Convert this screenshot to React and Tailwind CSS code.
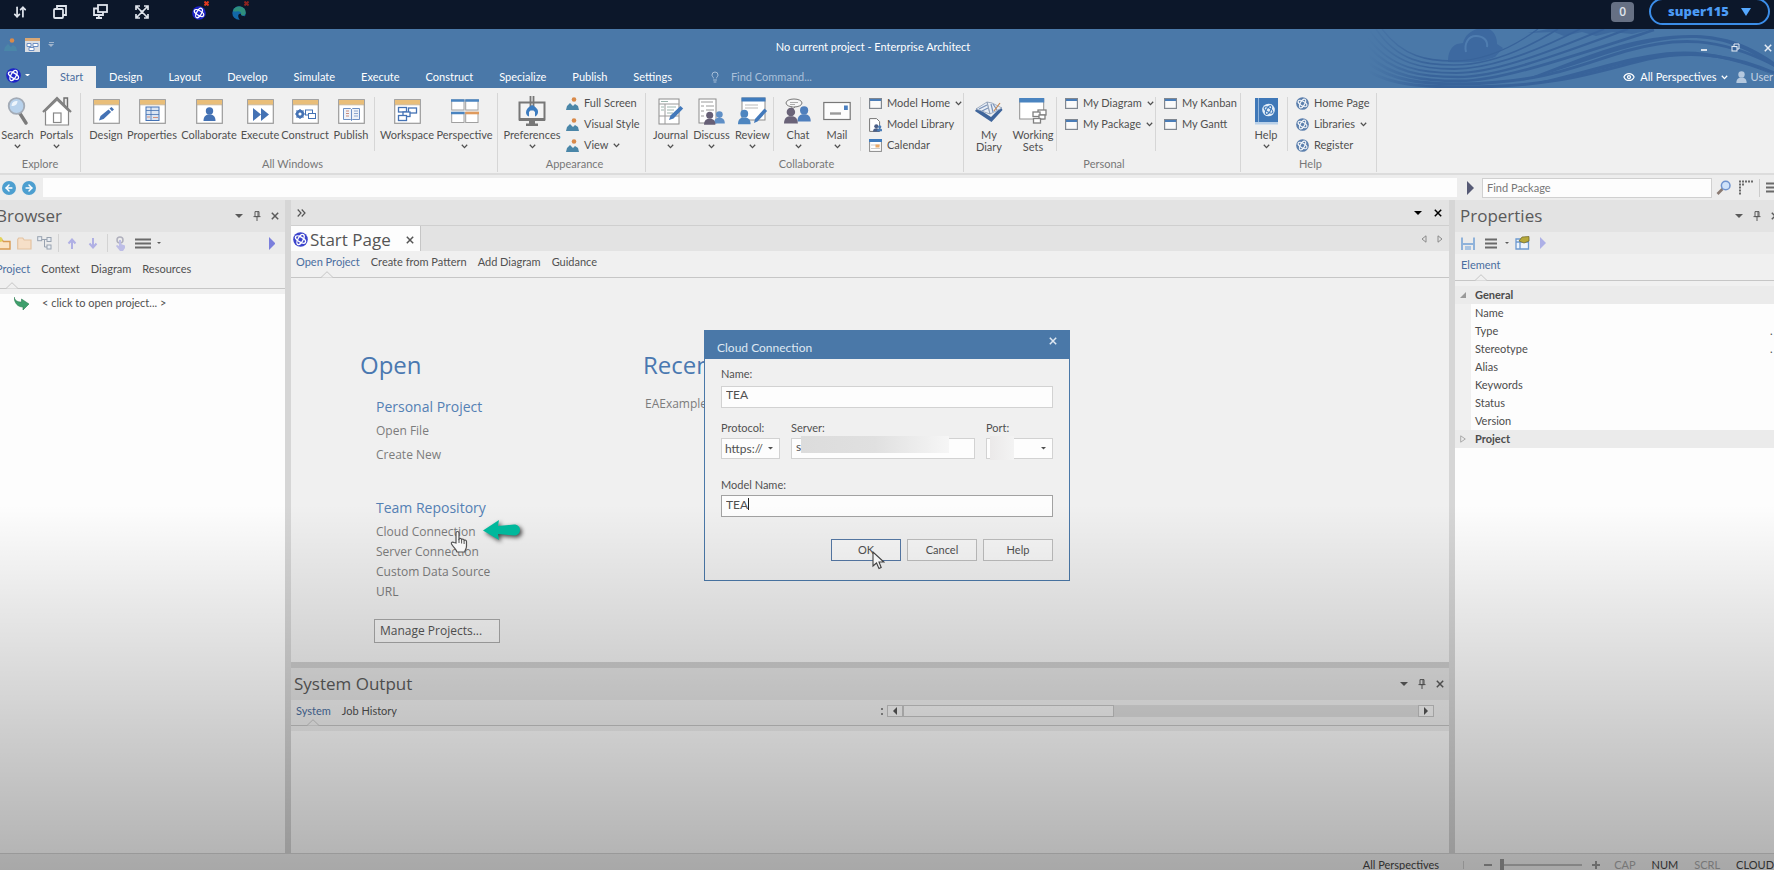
import { useState } from "react";
import { ArrowDownUp, ArrowLeft, ArrowRight, Eye, Lightbulb } from "lucide-react";

const BLUE = "#4472b4";

/* ---------- icons ---------- */

const Logo = ({ color = "#1d24c8", bg = "#ffffff", size = 14 }) => (
  <svg width={size} height={size} viewBox="0 0 16 16" className="shrink-0">
    <circle cx="8" cy="8" r="7.8" fill={color} />
    <g fill="none" stroke={bg} strokeWidth="1.4">
      <ellipse cx="8" cy="8" rx="6" ry="2.7" transform="rotate(30 8 8)" />
      <ellipse cx="8" cy="8" rx="6" ry="2.7" transform="rotate(-60 8 8)" />
    </g>
  </svg>
);

const Chevron = () => (
  <svg width="7" height="5" viewBox="0 0 7 5" className="shrink-0">
    <path d="M.8.8 3.5 3.6 6.2.8" fill="none" stroke="currentColor" strokeWidth="1.3" />
  </svg>
);

const Down = ({ size = 8 }) => (
  <svg width={size} height={size / 2} viewBox="0 0 8 4" className="shrink-0">
    <path d="M0 0h8L4 4z" fill="currentColor" />
  </svg>
);

const Cross = ({ size = 8 }) => (
  <svg width={size} height={size} viewBox="0 0 8 8" className="shrink-0">
    <path d="M.8.8l6.4 6.4M7.2.8.8 7.2" stroke="currentColor" strokeWidth="1.5" />
  </svg>
);

const RedMark = ({ color }) => (
  <svg width="5" height="5" viewBox="0 0 5 5" className="absolute -top-[3px] left-3">
    <path d="M.5.5l4 4M4.5.5l-4 4" stroke={color} strokeWidth="2" />
  </svg>
);

const Pin = () => (
  <svg width="8" height="10" viewBox="0 0 8 10" className="shrink-0">
    <path d="M2 .6h4v5H2zM5 .6v5M.5 5.6h7M4 5.6V10" fill="none" stroke="currentColor" />
  </svg>
);

const Play = ({ color, size = 12 }) => (
  <svg width={size / 2} height={size} viewBox="0 0 6 12" className="shrink-0">
    <path d="M0 0l6 6-6 6z" fill={color} />
  </svg>
);

const Bars = () => (
  <svg width="16" height="11" viewBox="0 0 16 11" className="shrink-0">
    <path d="M0 1.5h16M0 5.5h16M0 9.5h16" stroke="#6a6a6a" strokeWidth="1.8" />
  </svg>
);

const Person = ({ x = 0, y = 0, s = 1, fill = BLUE }) => (
  <g transform={`translate(${x} ${y}) scale(${s})`} fill={fill}>
    <circle cx="6" cy="4" r="3.7" />
    <path d="M0 14c0-5 2.5-6.5 6-6.5s6 1.5 6 6.5z" />
  </g>
);

const Picture = () => (
  <svg width="13" height="13" viewBox="0 0 13 13" className="shrink-0">
    <circle cx="8" cy="2.5" r="2.3" fill="#d98a4a" />
    <path d="M0 13l1-4 3-3 3 3 2-2 3 2 1 4z" fill="#4a86a8" />
  </svg>
);

const Frame = ({ children }) => (
  <svg width="27" height="25" viewBox="0 0 27 25">
    <rect x=".7" y=".7" width="25.6" height="23.6" fill="#fff" stroke="#9b9b9b" strokeWidth="1.2" />
    <rect x="1" y="1" width="25" height="4.5" fill="#e9be79" />
    <path d="M1 5.8h25" stroke="#b9a078" strokeWidth=".7" />
    {children}
  </svg>
);

const ICONS = {
  search: (
    <svg width="22" height="28" viewBox="0 0 22 28">
      <path d="M12 15l7 11" stroke="#7b7b7b" strokeWidth="3.4" strokeLinecap="round" />
      <circle cx="9.5" cy="9" r="7.8" fill="#b8d2ec" stroke="#a3abb6" strokeWidth="1.8" />
      <path d="M4.5 9a5 5 0 0 1 6-5c0 3-2 5-6 5z" fill="#eef5fc" />
    </svg>
  ),
  portals: (
    <svg width="30" height="30" viewBox="0 0 30 30">
      <path d="M22 9V2h3.5v11" fill="#e8e8e8" stroke="#6e6e6e" strokeWidth="1.4" />
      <path d="M3.5 15v14h23V15L15 4z" fill="#fff" stroke="#888" strokeWidth="1.2" />
      <path d="M1 16L15 2l14 14" fill="none" stroke="#808080" strokeWidth="2.2" />
      <rect x="11.5" y="17" width="7.5" height="9.5" fill="#fff" stroke="#888" strokeWidth="1.2" />
    </svg>
  ),
  design: (
    <Frame>
      <path d="M6 21.5l1.5-4.5 8-6.5 2.6 2.6-7.5 7z" fill={BLUE} />
      <path d="M16.5 9.5l2-1.5 2.5 2.5-2 1.7z" fill={BLUE} />
    </Frame>
  ),
  properties: (
    <Frame>
      <rect x="7" y="8" width="13" height="13.5" fill="#dbe5f2" stroke={BLUE} />
      <path d="M7 11.5h13M7 15.5h13M12 8v13" stroke={BLUE} strokeWidth=".8" />
      <path d="M8 18h3M14 18.5h5" stroke="#d58f7b" />
    </Frame>
  ),
  collaborate: (
    <Frame>
      <Person x={7.5} y={8} />
    </Frame>
  ),
  execute: (
    <Frame>
      <path d="M6 9l8 6.5L6 22zM14 9l8 6.5-8 6.5z" fill={BLUE} />
    </Frame>
  ),
  construct: (
    <Frame>
      <circle cx="8" cy="15" r="3" fill="none" stroke={BLUE} strokeWidth="2.4" />
      <path d="M8 10v10M3 15h10M4.5 11.5l7 7M11.5 11.5l-7 7" stroke={BLUE} strokeWidth="1.2" />
      <circle cx="8" cy="15" r="1.5" fill="#fff" />
      <rect x="13.5" y="11" width="7" height="5" fill="#fff" stroke={BLUE} />
      <rect x="16.5" y="14.5" width="7" height="5" fill="#fff" stroke={BLUE} />
    </Frame>
  ),
  publish: (
    <Frame>
      <path d="M5.5 9.5h7l1 1 1-1h7v11h-7l-1 1-1-1h-7zM13.5 10.5v11" fill="#eef2f8" stroke="#6c8fc4" />
      <path d="M8 12h3M8 14.5h3M8 17h3" stroke="#c98c7c" />
      <path d="M16 12h4M16 14.5h4M16 17h4" stroke="#8ea8cf" />
    </Frame>
  ),
  workspace: (
    <Frame>
      <g fill="#fff" stroke={BLUE} strokeWidth="1.3">
        <rect x="4.5" y="8.5" width="8" height="4.5" />
        <rect x="14.5" y="9" width="8" height="5" />
        <rect x="9" y="13" width="7" height="4.5" />
        <rect x="4.5" y="16.5" width="8" height="5" />
      </g>
    </Frame>
  ),
  perspective: (
    <svg width="28" height="25" viewBox="0 0 28 25">
      <g fill="#fff" stroke="#a0a0a0">
        <rect x=".7" y="1" width="12.3" height="10" />
        <rect x="14.7" y="1" width="12.3" height="10" />
        <rect x=".7" y="13.5" width="12.3" height="10" />
        <rect x="14.7" y="13.5" width="12.3" height="10" />
      </g>
      <path d="M0 1.5h13.5M14.3 1.5H28M0 14h13.5" stroke="#4a84c0" strokeWidth="2.6" />
      <path d="M14.3 14H28" stroke="#df9a5d" strokeWidth="2.6" />
    </svg>
  ),
  preferences: (
    <svg width="28" height="30" viewBox="0 0 28 30">
      <rect x="1.5" y="6.5" width="25" height="17" fill="#f4f4f4" stroke="#777" strokeWidth="2" />
      <path d="M1 22h26v3H1zM11 25h6v2.5h3V30H8v-2.5h3z" fill="#777" />
      <path d="M12.5 0v11M15.5 0v11" stroke="#777" strokeWidth="1.8" />
      <path
        d="M14 9c4 2 6.5 4.5 6 7.5-.3 2-1.5 3.5-3 4v-4.5l-1.5-1.5h-3L11 16v4.5c-1.7-.7-3-2-3-4.3C8 13.5 10.5 11 14 9z"
        fill="#3c7cc0"
      />
    </svg>
  ),
  journal: (
    <svg width="26" height="27" viewBox="0 0 26 27">
      <rect x="1" y="1" width="20" height="25" fill="#fff" stroke="#8b8b8b" />
      <path d="M1 6h20M7 6v20M1 18h20" stroke="#9a9a9a" />
      <path d="M9 9h9M9 12h7M9 15h6M3 9h3M3 12h3M3 3.5h7" stroke="#9db5ae" />
      <path d="M11 22l1.5-4.5L22.5 8l2.7 2.6-9.7 9.9z" fill="#4279bb" />
    </svg>
  ),
  discuss: (
    <svg width="27" height="27" viewBox="0 0 27 27">
      <rect x="1" y="1" width="17" height="24" fill="#fff" stroke="#8b8b8b" />
      <path d="M3 4h12M3 8h3M8 8h8M3 13h3M8 12h8M3 18h3" stroke="#9a9a9a" />
      <Person x={16} y={13} s={0.9} fill="#5f8fc6" />
      <Person x={6} y={13.5} s={0.95} fill="#665f76" />
    </svg>
  ),
  review: (
    <svg width="30" height="28" viewBox="0 0 30 28">
      <rect x="4" y="1" width="23" height="22" fill="#fff" stroke="#8b8b8b" />
      <rect x="3.5" y=".5" width="24" height="4" fill="#3f7bbd" />
      <path d="M7 8h13M7 11h13" stroke="#b9b9b9" />
      <Person x={0} y={12.5} s={1.05} fill="#4e86c0" />
      <path d="M16 26l1-4 9.5-10.5 2.6 2.5-9.6 10.5z" fill="#4279bb" />
    </svg>
  ),
  chat: (
    <svg width="28" height="27" viewBox="0 0 28 27">
      <ellipse cx="10" cy="5" rx="8" ry="4" fill="#f6f6f6" stroke="#777" />
      <path d="M6 4.5h8M6 6.5h5" stroke="#999" strokeWidth=".8" />
      <path d="M8 8.5v2.5l3-2" fill="#f6f6f6" stroke="#777" />
      <Person x={13.5} y={8} s={1.1} fill="#4f7fbd" />
      <Person x={0} y={9.5} s={1.15} fill="#6a6378" />
    </svg>
  ),
  mail: (
    <svg width="28" height="27" viewBox="0 0 28 27">
      <rect x=".8" y="4.5" width="26.4" height="17" fill="#fdfdfd" stroke="#777" strokeWidth="1.2" />
      <rect x="21" y="7.5" width="3.8" height="4.5" fill="#4a7fc0" />
      <path d="M7 15.5h11" stroke="#9a9a9a" strokeWidth="2.4" />
    </svg>
  ),
  diary: (
    <svg width="28" height="26" viewBox="0 0 28 26">
      <path d="M0 13l2-3 14 9 10-10 1.5 3-11 12z" fill="#3f659b" />
      <path d="M1 11L12 4l3 12zM15 16L12 4l5 1 10 5z" fill="#e9eef5" stroke="#8d9db5" strokeWidth=".8" />
      <path d="M4 11l8-4M7 13l6-3M18 14l-2-8M22 12l-4-6" stroke="#7a93b9" strokeWidth="1.2" />
      <path d="M19 13l6-8" stroke="#c88a55" strokeWidth="1.2" />
    </svg>
  ),
  working: (
    <svg width="28" height="26" viewBox="0 0 28 26">
      <rect x=".7" y="1" width="24" height="20" fill="#fff" stroke="#909090" />
      <rect x=".2" y="0" width="25" height="4.5" fill="#4a84c0" />
      <g fill="#fff" stroke="#808080" strokeWidth="1.3">
        <rect x="19" y="12" width="8" height="5" />
        <rect x="14" y="14" width="7" height="4.5" />
        <rect x="20" y="17" width="6" height="4" />
        <rect x="14.5" y="20.5" width="7" height="4.5" />
      </g>
    </svg>
  ),
  help: (
    <svg width="23" height="27" viewBox="0 0 23 27">
      <path d="M0 0h23v24H0z" fill="#3f78b8" />
      <path d="M3.5 0v24" stroke="#8fb4dc" />
      <path d="M0 24h23v2.5H0z" fill="#b9d0e8" />
      <circle cx="13.5" cy="12" r="6.3" fill="#e4eef8" />
      <g fill="none" stroke="#3f78b8" strokeWidth="1.1">
        <ellipse cx="13.5" cy="12" rx="4.8" ry="2.1" transform="rotate(30 13.5 12)" />
        <ellipse cx="13.5" cy="12" rx="4.8" ry="2.1" transform="rotate(-60 13.5 12)" />
      </g>
    </svg>
  ),
};

const SMALL = {
  picture: <Picture />,
  window: (
    <svg width="13" height="11" viewBox="0 0 13 11" className="shrink-0">
      <rect x=".6" y=".6" width="11.8" height="9.8" fill="#fafafa" stroke="#808790" strokeWidth="1.2" />
      <path d="M1 2h11" stroke="#4a7db8" strokeWidth="2" />
    </svg>
  ),
  logo: <Logo color="#5b7fad" bg="#f2f5f9" size={13} />,
  library: (
    <svg width="13" height="14" viewBox="0 0 13 14" className="shrink-0">
      <path d="M.6.6h7l3 3v9.8H.6z" fill="#fff" stroke="#777" />
      <Person x={4} y={6} s={0.55} fill="#4b5f86" />
      <Person x={8} y={7} s={0.45} fill="#4a7db8" />
    </svg>
  ),
  calendar: (
    <svg width="13" height="13" viewBox="0 0 13 13" className="shrink-0">
      <rect x=".6" y=".6" width="11.8" height="11.8" fill="#fff" stroke="#8a8a8a" />
      <rect x="0" y="0" width="13" height="3" fill="#3f7bbd" />
      <path d="M2 6h9M2 9.5h9" stroke="#ccc" />
      <rect x="6.5" y="5.5" width="4" height="3" fill="#e8a868" />
    </svg>
  ),
};

/* ---------- top bars ---------- */

const RemoteBar = () => (
  <div className="flex h-[29px] shrink-0 items-center justify-between overflow-hidden bg-[#0c172a] pr-1 pb-[6px] pl-3 text-[#dfe4ec]">
    <div className="flex items-center">
      <button aria-label="Transfer" className="flex w-[41px] pl-px">
        <ArrowDownUp size={14} strokeWidth={3} />
      </button>
      <button aria-label="Copy window" className="flex w-10">
        <svg width="14" height="14" viewBox="0 0 14 14" fill="none" stroke="currentColor" strokeWidth="1.8">
          <rect x="1" y="4" width="9" height="9" rx="1" />
          <path d="M4 4V1h9v9h-3" />
        </svg>
      </button>
      <button aria-label="Displays" className="flex w-[42px]">
        <svg width="15" height="15" viewBox="0 0 15 15" fill="none" stroke="currentColor" strokeWidth="1.8">
          <rect x="5" y="1" width="9" height="7" />
          <path d="M5 4.5H1V11h9V8M3 14h6M5.8 11v3" />
        </svg>
      </button>
      <button aria-label="Full screen" className="flex w-[57px]">
        <svg width="14" height="14" viewBox="0 0 14 14" fill="none" stroke="currentColor" strokeWidth="1.7">
          <path d="M1 5V1h4M9 1h4v4M13 9v4H9M5 13H1V9M1 1l12 12M13 1L1 13" />
          <path d="M5.5 5.5h3v3h-3z" fill="currentColor" stroke="none" />
        </svg>
      </button>
      <button aria-label="Enterprise Architect" className="relative flex w-10 pt-[2px]">
        <Logo />
        <RedMark color="#e03a1f" />
      </button>
      <button aria-label="Edge" className="relative flex pt-[2px]">
        <svg width="14" height="14" viewBox="0 0 14 14">
          <circle cx="7" cy="7" r="6.7" fill="#1268a8" />
          <path
            d="M1 5a6.500 6.500 0 0 1 12.700 1.800c0 2-1.700 3-3.700 2.700-1.400-.2-1.200-1-.9-1.900C9.200 6 7.500 5 6 5.200 3.500 5.400 2 6 1 5z"
            fill="#2f8f7c"
          />
          <path d="M9 8c-.3 1.5 1.5 2.5 3.5 1.8L14 14H8C5.500 11.500 5.500 7 9 8z" fill="#0c172a" />
        </svg>
        <RedMark color="#8c2420" />
      </button>
    </div>
    <div className="flex items-center gap-[15px]">
      <span className="rounded-sm bg-[#667084] px-2 text-xs leading-5 font-semibold">0</span>
      <button className="flex h-[27px] w-[121px] items-center justify-center gap-3 rounded-full border-2 border-[#3b8de8] text-[13px] font-extrabold text-[#4b9bf5]">
        super115
        <svg width="10" height="8" viewBox="0 0 10 8">
          <path d="M0 0h10L5 8z" fill="#55a8ff" />
        </svg>
      </button>
    </div>
  </div>
);

const TABS = ["Design", "Layout", "Develop", "Simulate", "Execute", "Construct", "Specialize", "Publish", "Settings"];

const Waves = () => (
  <svg className="absolute top-0 right-0 h-full w-[406px]" viewBox="0 0 406 59" preserveAspectRatio="none" fill="none">
    <defs>
      <linearGradient id="fade" x1="0" x2="60" y1="0" y2="0" gradientUnits="userSpaceOnUse">
        <stop offset="0" stopColor="#38639a" stopOpacity="0" />
        <stop offset="1" stopColor="#38639a" />
      </linearGradient>
    </defs>
    <path d="M80 33c0-8 2-15 9-18l6-1c2-8 8-12 14-14h12c6 3 8 9 8 15l6 4-8 9c-12 5-30 6-47 5z" fill="#3d69a0" />
    <path d="M98 23c-2-8 2-16 10-16s12 5 11 11" stroke="#4f7db0" strokeWidth="2" />
    <g stroke="url(#fade)">
      <path d="M14 0C35 28 60 32 85 32S140 22 170 0" strokeWidth="1.4" />
      <path d="M8 0C30 33 58 36 86 36S150 25 190 0" strokeWidth="1.6" />
      <path d="M2 2C26 36 56 40 86 40S160 27 212 0" strokeWidth="1.8" />
      <path d="M0 9C24 40 54 44 88 44S170 28 236 0" strokeWidth="2" />
      <path d="M0 17C24 44 54 48 90 48S180 30 260 0" strokeWidth="2.4" />
      <path d="M0 26C24 48 54 52 92 52S190 32 286 1" strokeWidth="2.8" />
      <path d="M0 34C24 52 54 55 94 55 180 53 210 36 258 22 310 7 350 8 406 36" strokeWidth="3" />
      <path d="M0 42C24 56 54 58 96 58 190 58 230 42 280 30 330 20 370 28 406 44" strokeWidth="3" />
    </g>
    <path d="M150 53C200 40 240 22 285 13c50-9 80-3 121 25v-5C365 4 330 3 285 9c-50 8-90 28-135 44z" fill="#38639a" />
    <path d="M150 57c60-8 90-20 130-27 50-8 80-2 126 16-46-22-80-28-126-20-45 8-80 22-130 31z" fill="#38639a" />
    <path d="M160 4l20-4h106l-22 5-20-2-16 4-14-4-18 4-10-4z" fill="#38639a" opacity=".7" />
  </svg>
);

const TitleBar = () => (
  <header className="relative flex h-[59px] shrink-0 flex-col overflow-hidden bg-[#4a78a8] font-['Lato','Open_Sans',sans-serif] text-[11px] text-white">
    <Waves />
    <div className="relative flex h-[37px] items-center justify-between">
      <div className="flex flex-1 items-center gap-2 pb-[6px] pl-1">
        <Picture />
        <svg width="15" height="14" viewBox="0 0 15 14">
          <rect width="15" height="14" fill="#d9dde3" />
          <rect width="15" height="3" fill="#d9a876" />
          <path d="M2 5.5h4v3H2zM8 5.5h5v3H8zM4 9.5h5v3H4z" fill="#fff" stroke="#6c8fc4" />
        </svg>
        <span className="flex flex-col items-center gap-px text-[#9fb4cc]">
          <span className="h-px w-[5px] bg-[#9fb4cc]" />
          <Down size={6} />
        </span>
      </div>
      <h1 className="pr-8">No current project - Enterprise Architect</h1>
      <div className="flex flex-1 items-center justify-end gap-6 text-[#e6ecf4]">
        <button aria-label="Minimize" className="mt-1 h-[2px] w-[6px] bg-[#d7e1ec]" />
        <button aria-label="Restore">
          <svg width="9" height="9" viewBox="0 0 9 9" fill="none" stroke="currentColor">
            <rect x="1" y="3.5" width="5" height="4.5" />
            <path d="M3 3.5V1h5v5H6" />
          </svg>
        </button>
        <button aria-label="Close" className="pr-[2px]">
          <Cross />
        </button>
      </div>
    </div>
    <nav className="relative flex h-[22px] items-center">
      <button aria-label="Application menu" className="flex w-[47px] items-center gap-1 pb-1 pl-[6px]">
        <Logo size={15} />
        <Down size={5} />
      </button>
      <button className="h-full bg-[#f0f0f0] px-[13px] text-[#4a6e9f]">Start</button>
      {TABS.map((tab) => (
        <button key={tab} className="px-[13px]">
          {tab}
        </button>
      ))}
      <label className="ml-6 flex items-center gap-[10px] text-[#a9c0da]">
        <Lightbulb size={12} />
        <input aria-label="Find Command" placeholder="Find Command..." className="w-28 outline-none placeholder:text-[#a9c0da]" />
      </label>
      <div className="ml-auto flex items-center gap-1 pr-px">
        <Eye size={12} strokeWidth={2.5} />
        <button className="flex items-center gap-1 pl-px">
          All Perspectives <Chevron />
        </button>
        <svg width="11" height="12" viewBox="0 0 12 14" className="ml-1">
          <Person fill="#b4c8de" />
        </svg>
        <button className="text-[#c3d2e3]">User</button>
      </div>
    </nav>
  </header>
);

/* ---------- ribbon ---------- */

const Big = ({ icon, label, width, menu }) => (
  <button className={`flex flex-col items-center ${width}`}>
    <span className="flex h-9 items-center justify-center">{ICONS[icon]}</span>
    <span className="text-center leading-3 whitespace-pre">{label}</span>
    {menu && (
      <span className="mt-[3px]">
        <Chevron />
      </span>
    )}
  </button>
);

const Small = ({ icon, label, menu }) => (
  <button className="flex h-[21px] items-center gap-[5px] whitespace-nowrap">
    {SMALL[icon]}
    {label}
    {menu && <Chevron />}
  </button>
);

const Split = () => <div className="mt-1 h-[54px] w-px shrink-0 bg-[#d6d6d6]" />;

const Group = ({ title, width, children }) => (
  <section className={`flex shrink-0 flex-col border-r border-[#d6d6d6] ${width}`}>
    <div className="flex h-[63px]">{children}</div>
    <h2 className="text-center leading-4 text-[#777777]">{title}</h2>
  </section>
);

const Ribbon = () => (
  <div className="flex h-[87px] shrink-0 overflow-hidden border-b-2 border-[#dcdcdc] bg-[#f0f0f0] pt-[5px] pb-px font-['Lato','Open_Sans',sans-serif] text-[11px] text-[#505050]">
    <Group title="Explore" width="w-[81px]">
      <Big icon="search" label="Search" width="w-[35px]" menu />
      <Big icon="portals" label="Portals" width="w-[43px]" menu />
    </Group>
    <Group title="All Windows" width="w-[417px] pl-[7px]">
      <Big icon="design" label="Design" width="w-[36px]" />
      <Big icon="properties" label="Properties" width="w-[56px]" />
      <Big icon="collaborate" label="Collaborate" width="w-[58px]" />
      <Big icon="execute" label="Execute" width="w-[44px]" />
      <Big icon="construct" label="Construct" width="w-[46px]" />
      <Big icon="publish" label="Publish" width="w-[46px]" />
      <Split />
      <div className="flex pl-1">
        <Big icon="workspace" label="Workspace" width="w-[56px]" />
        <Big icon="perspective" label="Perspective" width="w-[59px]" menu />
      </div>
    </Group>
    <Group title="Appearance" width="w-[148px] pl-[6px]">
      <Big icon="preferences" label="Preferences" width="w-[56px]" menu />
      <div className="pl-[6px]">
        <Small icon="picture" label="Full Screen" />
        <Small icon="picture" label="Visual Style" />
        <Small icon="picture" label="View" menu />
      </div>
    </Group>
    <Group title="Collaborate" width="w-[318px] pl-1">
      <Big icon="journal" label="Journal" width="w-[41px]" menu />
      <Big icon="discuss" label="Discuss" width="w-[41px]" menu />
      <Big icon="review" label="Review" width="w-[41px]" menu />
      <Split />
      <div className="flex px-1">
        <Big icon="chat" label="Chat" width="w-[40px]" menu />
        <Big icon="mail" label="Mail" width="w-[38px]" menu />
      </div>
      <Split />
      <div className="pl-2">
        <Small icon="window" label="Model Home" menu />
        <Small icon="library" label="Model Library" />
        <Small icon="calendar" label="Calendar" />
      </div>
    </Group>
    <Group title="Personal" width="w-[277px] pl-1">
      <Big icon="diary" label={"My\nDiary"} width="w-[42px]" />
      <Big icon="working" label={"Working\nSets"} width="w-[46px]" />
      <Split />
      <div className="w-[98px] pl-2">
        <Small icon="window" label="My Diagram" menu />
        <Small icon="window" label="My Package" menu />
      </div>
      <Split />
      <div className="pl-2">
        <Small icon="window" label="My Kanban" />
        <Small icon="window" label="My Gantt" />
      </div>
    </Group>
    <Group title="Help" width="w-[136px] pl-1">
      <Big icon="help" label="Help" width="w-[42px]" menu />
      <Split />
      <div className="pl-2">
        <Small icon="logo" label="Home Page" />
        <Small icon="logo" label="Libraries" menu />
        <Small icon="logo" label="Register" />
      </div>
    </Group>
  </div>
);

const NavBar = () => (
  <div className="flex h-[25px] shrink-0 items-center overflow-hidden bg-[#ededed] pl-[2px]">
    <button aria-label="Back" className="flex size-[14px] items-center justify-center rounded-full bg-[#4d9fd0] text-white">
      <ArrowLeft size={10} strokeWidth={3.5} />
    </button>
    <button aria-label="Forward" className="ml-[6px] flex size-[14px] items-center justify-center rounded-full bg-[#4d9fd0] text-white">
      <ArrowRight size={10} strokeWidth={3.5} />
    </button>
    <input aria-label="Location" className="ml-[7px] h-[19px] min-w-0 flex-1 bg-[#fdfdfd] outline-none" />
    <button aria-label="Go" className="mr-2 ml-[10px]">
      <Play color="#565a75" size={14} />
    </button>
    <input
      aria-label="Find Package"
      placeholder="Find Package"
      className="h-5 w-[230px] border border-[#d0d0d0] bg-[#fdfdfd] px-1 font-['Lato','Open_Sans',sans-serif] text-[11px] outline-none placeholder:text-[#777777]"
    />
    <button aria-label="Search" className="ml-1">
      <svg width="16" height="16" viewBox="0 0 16 16">
        <path d="M1.5 14l5-5" stroke="#8a7a72" strokeWidth="2.6" />
        <circle cx="9.7" cy="5.5" r="4.3" fill="#cfe2fa" stroke="#6f93cf" strokeWidth="1.5" />
      </svg>
    </button>
    <svg width="16" height="15" viewBox="0 0 16 15" className="ml-[6px]">
      <path d="M1 1.5h14M1 4.5h6M1 7.5h3M1 10.5h3M1 13.5h3" stroke="#6a6a6a" strokeWidth="2" strokeDasharray="2 1" />
    </svg>
    <span className="ml-[5px] h-[18px] w-px bg-[#cccccc]" />
    <button aria-label="Menu" className="-mr-2 ml-[6px]">
      <Bars />
    </button>
  </div>
);

/* ---------- docked panels ---------- */

const PanelHeader = ({ title, className = "", actions = "pr-[6px]" }) => (
  <div className={`flex h-8 shrink-0 items-center justify-between overflow-hidden bg-[#e3e3e3] text-[#5a5a5a] ${className}`}>
    <h2 className="text-[17px] leading-6">{title}</h2>
    <div className={`flex items-center gap-[10px] ${actions}`}>
      <button aria-label="Options">
        <Down />
      </button>
      <button aria-label="Pin">
        <Pin />
      </button>
      <button aria-label="Close">
        <Cross />
      </button>
    </div>
  </div>
);

// Row of text tabs over a rule; the active tab gets a notch in the rule
const PanelTabs = ({ tabs, className, notch, children }) => (
  <div
    className={`relative flex shrink-0 justify-between border-b border-[#c6c6c6] bg-[#f0f0f0] font-['Lato','Open_Sans',sans-serif] text-[11px] leading-4 text-[#505050] ${className}`}
  >
    <div className="flex gap-[11px]">
      {tabs.map((tab, i) => (
        <button key={tab} className={`flex items-start ${i === 0 ? "text-[#4a6e9f]" : ""}`}>
          {tab}
        </button>
      ))}
    </div>
    {children}
    <svg width="12" height="7" viewBox="0 0 12 7" className={`absolute -bottom-px ${notch}`}>
      <path d="M0 6.5L6 .7l6 5.800" fill="#f0f0f0" stroke="#c6c6c6" />
    </svg>
  </div>
);

const ToolSplit = () => <span className="h-[18px] w-px bg-[#d3d3d3]" />;

const BrowserPanel = () => (
  <aside className="flex w-[285px] shrink-0 flex-col overflow-hidden bg-[#fdfdfd]">
    <PanelHeader title="Browser" className="-ml-1" />
    <div className="flex h-[22px] shrink-0 items-center bg-[#ebebeb]">
      <svg width="11" height="13" viewBox="0 0 11 13">
        <path d="M-4 3h6l1.5 1.5H10V12H-4z" fill="#fbe3c4" stroke="#d99a52" strokeWidth="1.4" />
        <circle cx="0" cy="2.5" r="2.5" fill="#e2d35c" />
      </svg>
      <svg width="15" height="13" viewBox="0 0 15 13" className="ml-[6px]">
        <path d="M.7 12V2.5l1-1.5h4l1.5 2H14v9z" fill="#f6dfc8" stroke="#e3c3a2" strokeWidth="1.2" />
      </svg>
      <svg width="15" height="14" viewBox="0 0 15 14" className="mr-[6px] ml-[5px]" fill="#e8edf3" stroke="#98a2b0">
        <rect x=".7" y=".7" width="4" height="4" />
        <rect x="10" y="1.5" width="4" height="4" />
        <rect x="10" y="9" width="4" height="4" />
        <path d="M4.7 3.5H10M7.5 3.5V11H10" fill="none" />
      </svg>
      <ToolSplit />
      <svg width="32" height="11" viewBox="0 0 32 11" className="mx-2" stroke="#b0b0e4" strokeWidth="2" fill="none">
        <path d="M5 11V2M1.5 5.5L5 1.5l3.5 4M26 0v9M22.5 5.5L26 9.5l3.5-4" />
      </svg>
      <ToolSplit />
      <svg width="11" height="15" viewBox="0 0 11 15" className="mr-[9px] ml-[7px]">
        <circle cx="5" cy="4" r="3" fill="none" stroke="#b0b0bd" strokeWidth="1.5" />
        <path d="M4 4h2v4l4 1.500V12l-2 3H5L1 10l1-1 2 1z" fill="#bdbde6" />
      </svg>
      <Bars />
      <span className="ml-[6px] text-[#5c5c5c]">
        <Down size={4} />
      </span>
      <button aria-label="Run" className="mr-[10px] ml-auto">
        <Play color="#7b7fdc" size={13} />
      </button>
    </div>
    <PanelTabs tabs={["Project", "Context", "Diagram", "Resources"]} className="-ml-1 h-[35px] pt-[7px]" notch="left-[10px]" />
    <div className="h-[5px] shrink-0 bg-[#f0f0f0]" />
    <button className="flex items-center gap-3 pt-px pl-[14px] font-['Lato','Open_Sans',sans-serif] text-[11px] text-[#505050]">
      <svg width="16" height="13" viewBox="0 0 16 13">
        <path d="M0 0c1 3.5 3 5 7.5 5V2L15 7l-6 6v-3C3.500 10 .5 6 0 0z" fill="#3f9f6c" stroke="#2b7d50" strokeWidth=".6" />
      </svg>
      &lt; click to open project... &gt;
    </button>
  </aside>
);

const TEAM = ["Cloud Connection", "Server Connection", "Custom Data Source", "URL"];

const StartPage = () => (
  <div className="flex min-h-0 flex-1 items-start overflow-hidden bg-[#f0f0f0] pt-[71px] pl-[69px] text-xs text-[#7c7c7c]">
    <div className="w-[283px] shrink-0">
      <h2 className="text-[24px] leading-8 text-[#4a78b0]">Open</h2>
      <div className="flex flex-col items-start pt-[14px] pl-4">
        <h3 className="text-sm leading-6 text-[#5480b4]">Personal Project</h3>
        <a href="#open-file" className="leading-6">
          Open File
        </a>
        <a href="#create-new" className="leading-6">
          Create New
        </a>
        <h3 className="mt-[29px] text-sm leading-6 text-[#5480b4]">Team Repository</h3>
        <div className="flex flex-col items-start pt-[2px] leading-5">
          {TEAM.map((item) => (
            <a key={item} href="#team">
              {item}
            </a>
          ))}
        </div>
        <button className="mt-[17px] -ml-[2px] h-6 w-[126px] border border-[#a9a9a9] bg-[#f6f6f6] pl-[5px] text-left text-[#555555]">
          Manage Projects...
        </button>
      </div>
    </div>
    <div>
      <h2 className="text-[24px] leading-8 text-[#4a78b0]">Recent</h2>
      <a href="#recent" className="mt-[11px] block pl-[2px] leading-6">
        EAExample
      </a>
    </div>
  </div>
);

const OutputScroll = () => (
  <div className="mt-[2px] mr-[15px] flex h-3 w-[48%] items-center">
    <span className="mr-1 flex flex-col gap-[3px]">
      <span className="size-[2px] bg-[#8c8c8c]" />
      <span className="size-[2px] bg-[#8c8c8c]" />
    </span>
    <button aria-label="Scroll left" className="flex h-3 w-4 rotate-180 items-center justify-center border border-[#c4c4c4] bg-[#f4f4f4]">
      <Play color="#555555" size={8} />
    </button>
    <div className="flex h-3 flex-1 bg-[#dddddd]">
      <div className="w-[41%] border border-[#c4c4c4] bg-[#f4f4f4]" />
    </div>
    <button aria-label="Scroll right" className="flex h-3 w-4 items-center justify-center border border-[#c4c4c4] bg-[#f4f4f4]">
      <Play color="#555555" size={8} />
    </button>
  </div>
);

const Center = () => (
  <main className="flex min-w-0 flex-1 flex-col border-x-[6px] border-[#d6d6d6]">
    <div className="flex h-[26px] shrink-0 items-center justify-between border-b border-[#cfcfcf] bg-[#e3e3e3] px-[6px] text-[#555555]">
      <svg width="9" height="8" viewBox="0 0 9 8" fill="none" stroke="currentColor" strokeWidth="1.2">
        <path d="M.7.5L4 4 .7 7.5M4.700.5L8 4 4.7 7.5" />
      </svg>
      <div className="flex gap-3 pr-px text-black">
        <button aria-label="Window list">
          <Down />
        </button>
        <button aria-label="Close window">
          <Cross />
        </button>
      </div>
    </div>
    <div className="flex h-[25px] shrink-0 items-center justify-between bg-[#e3e3e3] pr-[6px]">
      <div className="flex h-full items-center border-r border-[#c6c6c6] bg-[#fdfdfd] pt-[2px] pr-[6px] pl-[2px] text-[17px] text-[#555555]">
        <Logo color="#3c44cc" size={15} />
        <span className="pl-[2px]">Start Page</span>
        <button aria-label="Close Start Page" className="pl-[15px]">
          <Cross />
        </button>
      </div>
      <svg width="22" height="8" viewBox="0 0 22 8" fill="none" stroke="#8a8a8a">
        <path d="M5 .8v6.400L1 4zM17 .8v6.400L21 4z" />
      </svg>
    </div>
    <PanelTabs
      tabs={["Open Project", "Create from Pattern", "Add Diagram", "Guidance"]}
      className="h-[27px] pt-[3px] pl-[5px]"
      notch="left-[30px]"
    />
    <StartPage />
    <div className="h-[6px] shrink-0 bg-[#cdcdcd]" />
    <section className="flex h-[185px] shrink-0 flex-col bg-[#fdfdfd]">
      <PanelHeader title="System Output" className="pl-[3px]" actions="pr-[5px]" />
      <PanelTabs tabs={["System", "Job History"]} className="h-[26px] pt-[3px] pl-[5px]" notch="left-4">
        <OutputScroll />
      </PanelTabs>
      <div className="h-[5px] bg-[#f0f0f0]" />
    </section>
  </main>
);

const PROPS = ["Name", "Type", "Stereotype", "Alias", "Keywords", "Status", "Version"];

const PropertiesPanel = () => (
  <aside className="flex w-[319px] shrink-0 flex-col overflow-hidden bg-[#fdfdfd]">
    <PanelHeader title="Properties" className="pl-[5px]" actions="-mr-[5px]" />
    <div className="flex h-[22px] shrink-0 items-center bg-[#ebebeb] pl-[6px]">
      <button aria-label="Save">
        <svg width="14" height="13" viewBox="0 0 14 13">
          <path d="M1 .5v12.500M13 .5v12.500M1 7h12" stroke="#8fb2da" strokeWidth="2" />
          <path d="M4 9h6v4H4z" fill="#a9c4e2" />
        </svg>
      </button>
      <svg width="12" height="11" viewBox="0 0 12 11" className="ml-[10px]">
        <path d="M0 1.5h12M0 5.5h12M0 9.5h12" stroke="#6a6a6a" strokeWidth="1.8" />
      </svg>
      <span className="ml-2 text-[#5c5c5c]">
        <Down size={4} />
      </span>
      <svg width="15" height="14" viewBox="0 0 15 14" className="ml-[6px]">
        <path d="M1 3h12.500v10H1zM1 6h12.500M5 6v7" fill="#eef4fb" stroke="#6d9ad0" strokeWidth="1.3" />
        <path d="M4 5L7 1l7-.5V5L9 7z" fill="#b7a93a" stroke="#6e6526" strokeWidth=".7" />
      </svg>
      <span className="ml-[10px]">
        <Play color="#adb0e6" size={12} />
      </span>
    </div>
    <PanelTabs tabs={["Element"]} className="h-[27px] pt-[3px] pl-[6px]" notch="left-5" />
    <div className="h-[5px] shrink-0 bg-[#f0f0f0]" />
    <table className="w-full text-left font-['Lato','Open_Sans',sans-serif] text-[11px] text-[#4c4c4c]">
      <tbody>
        <tr className="h-[18px] bg-[#ebebeb]">
          <td className="w-4 pl-[5px]">
            <svg width="6" height="6" viewBox="0 0 6 6">
              <path d="M6 0v6H0z" fill="#999" />
            </svg>
          </td>
          <th colSpan={2} className="pl-1 font-bold">
            General
          </th>
        </tr>
        {PROPS.map((name) => (
          <tr key={name} className="h-[18px]">
            <td className="bg-[#f0f0f0]" />
            <th className="pl-1 font-normal">{name}</th>
            <td className="w-1">{(name === "Type" || name === "Stereotype") && "."}</td>
          </tr>
        ))}
        <tr className="h-[18px] bg-[#ebebeb]">
          <td className="pl-[5px]">
            <svg width="6" height="8" viewBox="0 0 6 8">
              <path d="M.7.8L5.300 4 .7 7.200z" fill="none" stroke="#aaa" />
            </svg>
          </td>
          <th colSpan={2} className="pl-1 font-bold">
            Project
          </th>
        </tr>
      </tbody>
    </table>
  </aside>
);

const StatusBar = () => (
  <footer className="flex h-[17px] shrink-0 items-center justify-end overflow-hidden border-t border-[#d6d6d6] bg-[#f0f0f0] pt-[6px] font-['Lato','Open_Sans',sans-serif] text-[11px] leading-3 text-[#444444]">
    <span>All Perspectives</span>
    <span className="mr-5 ml-6 h-2 w-px bg-[#cccccc]" />
    <span className="h-[2px] w-2 bg-[#999999]" />
    <input
      type="range"
      aria-label="Zoom"
      defaultValue={0}
      className="mr-[10px] ml-2 h-3 w-[82px] appearance-none bg-transparent [&::-webkit-slider-runnable-track]:h-[2px] [&::-webkit-slider-runnable-track]:bg-[#bbbbbb] [&::-webkit-slider-thumb]:-mt-[5px] [&::-webkit-slider-thumb]:h-3 [&::-webkit-slider-thumb]:w-1 [&::-webkit-slider-thumb]:appearance-none [&::-webkit-slider-thumb]:bg-[#999999]"
    />
    <svg width="8" height="8" viewBox="0 0 8 8">
      <path d="M4 0v8M0 4h8" stroke="#999" strokeWidth="2" />
    </svg>
    <div className="flex gap-4 pl-[14px]">
      <span className="text-[#a8a8a8]">CAP</span>
      <span>NUM</span>
      <span className="text-[#a8a8a8]">SCRL</span>
      <span>CLOUD</span>
    </div>
  </footer>
);

/* ---------- dialog ---------- */

const DropDown = ({ id, value, width, label }) => (
  <div className={width}>
    <label htmlFor={id} className="block leading-5">
      {label}
    </label>
    <div className="relative">
      <select id={id} className="block h-[21px] w-full appearance-none border border-[#d2d2d2] bg-[#fdfdfd] pl-[3px] text-xs outline-none">
        <option>{value}</option>
      </select>
      <span className="pointer-events-none absolute top-[9px] right-[7px]">
        <Down size={5} />
      </span>
      {!value && <span className="absolute -top-[2px] left-1 h-[24px] w-6 bg-linear-to-r from-[#ebe9e9] to-[#f3f3f3]" />}
    </div>
  </div>
);

const CloudDialog = () => {
  const [name, setName] = useState("TEA");
  const [model, setModel] = useState("TEA");

  return (
    <div
      role="dialog"
      aria-label="Cloud Connection"
      className="absolute top-[330px] left-1/2 w-[366px] -translate-x-1/2 border border-[#4a78a8] bg-[#f0f0f0] font-['Lato','Open_Sans',sans-serif] text-[11px] text-[#505050]"
    >
      <div className="flex h-7 items-center justify-between bg-[#4a78a8] px-3 text-[#dfe8f2]">
        <h2 className="pt-[6px] text-xs">Cloud Connection</h2>
        <button aria-label="Close dialog" className="-mt-2">
          <Cross />
        </button>
      </div>
      <form className="px-4 pt-[5px] pb-[19px]" onSubmit={(e) => e.preventDefault()}>
        <label htmlFor="name" className="block leading-5">
          Name:
        </label>
        <input
          id="name"
          value={name}
          onChange={(e) => setName(e.target.value)}
          className="mt-[2px] block h-[22px] w-full border border-[#d2d2d2] bg-[#fdfdfd] px-1 pb-[5px] text-xs outline-none"
        />
        <div className="mt-[10px] flex gap-[11px]">
          <DropDown id="protocol" label="Protocol:" value="https://" width="w-[59px]" />
          <div className="relative flex-1">
            <label htmlFor="server" className="block leading-5">
              Server:
            </label>
            <input id="server" defaultValue="s" className="block h-[21px] w-full border border-[#d2d2d2] bg-[#fdfdfd] px-1 pb-[5px] text-xs outline-none" />
            <span className="absolute top-[18px] left-[10px] h-[17px] w-[148px] bg-linear-to-r from-[#dcdcdc] via-[#e0e0e0] to-[#f6f6f6]" />
          </div>
          <DropDown id="port" label="Port:" value="" width="w-[67px]" />
        </div>
        <label htmlFor="model" className="mt-4 block leading-5">
          Model Name:
        </label>
        <div className="relative">
          <input
            id="model"
            value={model}
            onChange={(e) => setModel(e.target.value)}
            className="block h-[22px] w-full border border-[#a2a2a2] bg-[#fdfdfd] px-1 pb-1 text-xs outline-none"
          />
          <span className="absolute top-[3px] left-[27px] h-3 w-px bg-[#222222]" />
        </div>
        <div className="mt-[22px] flex justify-end gap-[6px]">
          <button className="h-[22px] w-[70px] border border-[#5578a5] bg-[#f6f6f6]">OK</button>
          <button className="h-[22px] w-[70px] border border-[#bcbcbc] bg-[#f6f6f6]">Cancel</button>
          <button className="h-[22px] w-[70px] border border-[#bcbcbc] bg-[#f6f6f6]">Help</button>
        </div>
      </form>
      {/* mouse pointer */}
      <svg width="13" height="19" viewBox="0 0 13 19" className="absolute top-[220px] left-[167px]">
        <path d="M1 1v14l3.5-3 2.5 5.5 2.2-1L7 11h4.8z" fill="#fff" stroke="#444" strokeWidth="1.1" />
      </svg>
    </div>
  );
};

export default function App() {
  return (
    <div className="relative flex h-screen flex-col overflow-hidden bg-[#f0f0f0] font-['Open_Sans','Noto_Sans',sans-serif]">
      <RemoteBar />
      <TitleBar />
      <Ribbon />
      <NavBar />
      <div className="flex min-h-0 flex-1">
        <BrowserPanel />
        <Center />
        <PropertiesPanel />
      </div>
      <StatusBar />
      <CloudDialog />
      {/* hand pointer */}
      <svg width="18" height="23" viewBox="0 0 18 23" className="absolute top-[530px] left-[450px]">
        <path
          d="M6 13V3c0-2 3-2 3 0v6c1-1 2.5-.5 2.6.6 1-.8 2.4-.3 2.5.8 1.2-.6 2.4 0 2.4 1.2V16c0 3-1.5 4-1.8 6H7c-.6-2.5-3.5-4.5-5.5-8-.6-1.5 1-2.6 2.5-1.500z"
          fill="#fff"
          stroke="#555"
          strokeWidth="1.2"
        />
        <path d="M9 9v4M11.6 10v3.5M14.1 11v3" stroke="#555" />
      </svg>
      <div className="pointer-events-none absolute inset-0 bg-linear-to-b from-transparent from-58% to-black/30" />
      {/* callout arrow */}
      <svg width="42" height="24" viewBox="0 0 42 24" className="absolute top-[519px] left-[482px] drop-shadow-[2px_2px_2px_rgba(0,0,0,0.7)]">
        <path d="M1 11.5L17 1l-1 6 16-1.500c8 0 8 11 0 11L16 15l1 6z" fill="#00b89c" />
      </svg>
    </div>
  );
}
